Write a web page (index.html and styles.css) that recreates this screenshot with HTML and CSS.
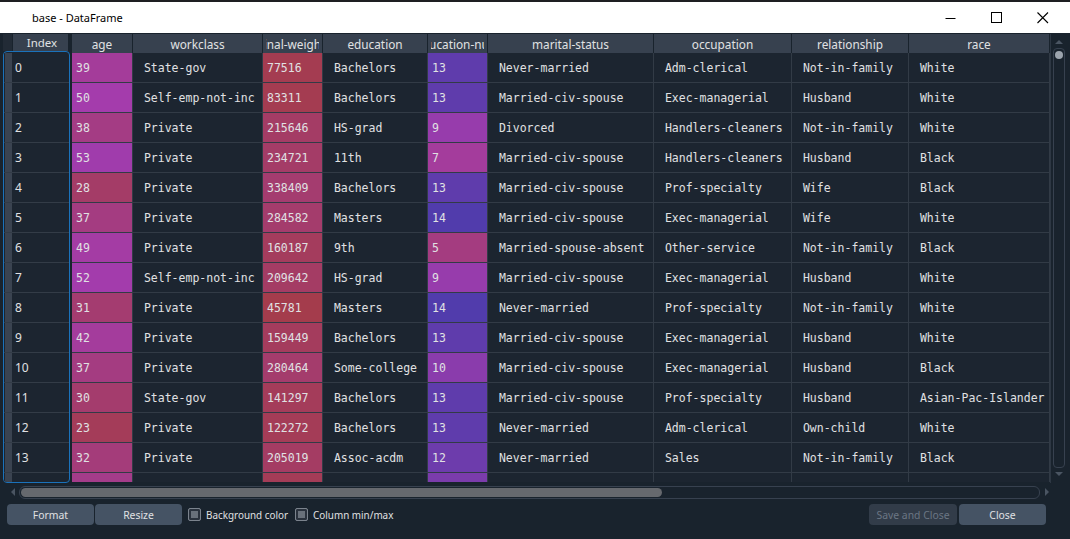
FILE: index.html
```html
<!DOCTYPE html>
<html>
<head>
<meta charset="utf-8">
<title>base - DataFrame</title>
<link rel="stylesheet" href="styles.css">
</head>
<body>
<div class="titlebar">
  <div class="title">base - DataFrame</div>
  <div class="controls">
    <div class="ctrl"><svg width="12" height="12" viewBox="0 0 12 12"><path d="M0.5 6.5h10" stroke="#000" stroke-width="1"/></svg></div>
    <div class="ctrl"><svg width="12" height="12" viewBox="0 0 12 12"><rect x="0.5" y="0.5" width="10" height="10" fill="none" stroke="#000" stroke-width="1"/></svg></div>
    <div class="ctrl"><svg width="12" height="12" viewBox="0 0 12 12"><path d="M0.5 0.5L11 11M11 0.5L0.5 11" stroke="#000" stroke-width="1.1"/></svg></div>
  </div>
</div>

<div class="main">
  <div class="grid-area">
    <div class="index-pane">
      <div class="index-headrow"><div class="corner"></div><div class="index-head">Index</div></div>
      <div class="index-body">
        <div class="irow"><span class="vh"></span><span class="ic">0</span></div>
        <div class="irow"><span class="vh"></span><span class="ic">1</span></div>
        <div class="irow"><span class="vh"></span><span class="ic">2</span></div>
        <div class="irow"><span class="vh"></span><span class="ic">3</span></div>
        <div class="irow"><span class="vh"></span><span class="ic">4</span></div>
        <div class="irow"><span class="vh"></span><span class="ic">5</span></div>
        <div class="irow"><span class="vh"></span><span class="ic">6</span></div>
        <div class="irow"><span class="vh"></span><span class="ic">7</span></div>
        <div class="irow"><span class="vh"></span><span class="ic">8</span></div>
        <div class="irow"><span class="vh"></span><span class="ic">9</span></div>
        <div class="irow"><span class="vh"></span><span class="ic">10</span></div>
        <div class="irow"><span class="vh"></span><span class="ic">11</span></div>
        <div class="irow"><span class="vh"></span><span class="ic">12</span></div>
        <div class="irow"><span class="vh"></span><span class="ic">13</span></div>
        <div class="irow"><span class="vh"></span><span class="ic">14</span></div>
      </div>
    </div>

    <div class="data-pane">
      <div class="data-head">
        <div class="hc"><div class="hl"><span>age</span></div></div>
        <div class="hc"><div class="hl"><span>workclass</span></div></div>
        <div class="hc"><div class="hl"><span>final-weight</span></div></div>
        <div class="hc"><div class="hl"><span>education</span></div></div>
        <div class="hc"><div class="hl"><span>education-num</span></div></div>
        <div class="hc"><div class="hl"><span>marital-status</span></div></div>
        <div class="hc"><div class="hl"><span>occupation</span></div></div>
        <div class="hc"><div class="hl"><span>relationship</span></div></div>
        <div class="hc"><div class="hl"><span>race</span></div></div>
      </div>
      <div class="data-body">
        <div class="row"><div class="c n" style="--h:310">39</div><div class="c"> State-gov</div><div class="c n" style="--h:351.1">77516</div><div class="c"> Bachelors</div><div class="c n" style="--h:261.4">13</div><div class="c"> Never-married</div><div class="c"> Adm-clerical</div><div class="c"> Not-in-family</div><div class="c"> White</div></div>
        <div class="row"><div class="c n" style="--h:300">50</div><div class="c"> Self-emp-not-inc</div><div class="c n" style="--h:350.7">83311</div><div class="c"> Bachelors</div><div class="c n" style="--h:261.4">13</div><div class="c"> Married-civ-spouse</div><div class="c"> Exec-managerial</div><div class="c"> Husband</div><div class="c"> White</div></div>
        <div class="row"><div class="c n" style="--h:322.2">38</div><div class="c"> Private</div><div class="c n" style="--h:340.0">215646</div><div class="c"> HS-grad</div><div class="c n" style="--h:293.0">9</div><div class="c"> Divorced</div><div class="c"> Handlers-cleaners</div><div class="c"> Not-in-family</div><div class="c"> White</div></div>
        <div class="row"><div class="c n" style="--h:297.8">53</div><div class="c"> Private</div><div class="c n" style="--h:338.5">234721</div><div class="c"> 11th</div><div class="c n" style="--h:308.9">7</div><div class="c"> Married-civ-spouse</div><div class="c"> Handlers-cleaners</div><div class="c"> Husband</div><div class="c"> Black</div></div>
        <div class="row"><div class="c n" style="--h:338.5">28</div><div class="c"> Private</div><div class="c n" style="--h:334">338409</div><div class="c"> Bachelors</div><div class="c n" style="--h:261.4">13</div><div class="c"> Married-civ-spouse</div><div class="c"> Prof-specialty</div><div class="c"> Wife</div><div class="c"> Black</div></div>
        <div class="row"><div class="c n" style="--h:323.9">37</div><div class="c"> Private</div><div class="c n" style="--h:336">284582</div><div class="c"> Masters</div><div class="c n" style="--h:253.4">14</div><div class="c"> Married-civ-spouse</div><div class="c"> Exec-managerial</div><div class="c"> Wife</div><div class="c"> White</div></div>
        <div class="row"><div class="c n" style="--h:304.3">49</div><div class="c"> Private</div><div class="c n" style="--h:344.5">160187</div><div class="c"> 9th</div><div class="c n" style="--h:324.7">5</div><div class="c"> Married-spouse-absent</div><div class="c"> Other-service</div><div class="c"> Not-in-family</div><div class="c"> Black</div></div>
        <div class="row"><div class="c n" style="--h:299.4">52</div><div class="c"> Self-emp-not-inc</div><div class="c n" style="--h:340.5">209642</div><div class="c"> HS-grad</div><div class="c n" style="--h:293.0">9</div><div class="c"> Married-civ-spouse</div><div class="c"> Exec-managerial</div><div class="c"> Husband</div><div class="c"> White</div></div>
        <div class="row"><div class="c n" style="--h:333.6">31</div><div class="c"> Private</div><div class="c n" style="--h:353.7">45781</div><div class="c"> Masters</div><div class="c n" style="--h:253.4">14</div><div class="c"> Never-married</div><div class="c"> Prof-specialty</div><div class="c"> Not-in-family</div><div class="c"> White</div></div>
        <div class="row"><div class="c n" style="--h:309">42</div><div class="c"> Private</div><div class="c n" style="--h:344.5">159449</div><div class="c"> Bachelors</div><div class="c n" style="--h:261.4">13</div><div class="c"> Married-civ-spouse</div><div class="c"> Exec-managerial</div><div class="c"> Husband</div><div class="c"> White</div></div>
        <div class="row"><div class="c n" style="--h:323.9">37</div><div class="c"> Private</div><div class="c n" style="--h:336">280464</div><div class="c"> Some-college</div><div class="c n" style="--h:285.1">10</div><div class="c"> Married-civ-spouse</div><div class="c"> Exec-managerial</div><div class="c"> Husband</div><div class="c"> Black</div></div>
        <div class="row"><div class="c n" style="--h:335.2">30</div><div class="c"> State-gov</div><div class="c n" style="--h:346.0">141297</div><div class="c"> Bachelors</div><div class="c n" style="--h:261.4">13</div><div class="c"> Married-civ-spouse</div><div class="c"> Prof-specialty</div><div class="c"> Husband</div><div class="c"> Asian-Pac-Islander</div></div>
        <div class="row"><div class="c n" style="--h:346.6">23</div><div class="c"> Private</div><div class="c n" style="--h:347.5">122272</div><div class="c"> Bachelors</div><div class="c n" style="--h:261.4">13</div><div class="c"> Never-married</div><div class="c"> Adm-clerical</div><div class="c"> Own-child</div><div class="c"> White</div></div>
        <div class="row"><div class="c n" style="--h:328">32</div><div class="c"> Private</div><div class="c n" style="--h:340.9">205019</div><div class="c"> Assoc-acdm</div><div class="c n" style="--h:269.3">12</div><div class="c"> Never-married</div><div class="c"> Sales</div><div class="c"> Not-in-family</div><div class="c"> Black</div></div>
        <div class="row"><div class="c n" style="--h:319.0">40</div><div class="c"> Private</div><div class="c n" style="--h:347.6">121772</div><div class="c"> Assoc-voc</div><div class="c n" style="--h:277.2">11</div><div class="c"> Married-civ-spouse</div><div class="c"> Craft-repair</div><div class="c"> Husband</div><div class="c"> Asian-Pac-Islander</div></div>
      </div>
    </div>

    <div class="vscroll">
      <svg class="arrow" width="10" height="6" viewBox="0 0 10 6"><path d="M1 5L5 1L9 5Z" fill="#4a5562"/></svg>
      <div class="vgroove"><div class="vhandle"></div></div>
      <svg class="arrow" width="10" height="6" viewBox="0 0 10 6"><path d="M1 1L5 5L9 1Z" fill="#4a5562"/></svg>
    </div>
  </div>

  <div class="hscroll">
    <svg class="harrow" width="6" height="10" viewBox="0 0 6 10"><path d="M5 1L1 5L5 9Z" fill="#4a5562"/></svg>
    <div class="hgroove"><div class="hhandle"></div></div>
    <svg class="harrow" width="6" height="10" viewBox="0 0 6 10"><path d="M1 1L5 5L1 9Z" fill="#4a5562"/></svg>
  </div>

  <div class="buttons">
    <div class="btn">Format</div>
    <div class="btn">Resize</div>
    <label class="check first"><span class="box"></span>Background color</label>
    <label class="check"><span class="box"></span>Column min/max</label>
    <div class="spacer"></div>
    <div class="btn disabled">Save and Close</div>
    <div class="btn">Close</div>
  </div>
</div>
</body>
</html>
```

FILE: styles.css
```css
* { box-sizing: border-box; }

body {
  margin: 0;
  width: 1070px;
  height: 539px;
  overflow: hidden;
  background: #19232d;
  font-family: "Noto Sans", "Open Sans", sans-serif;
  color: #e0e1e3;
}

/* ---------- title bar ---------- */
.titlebar {
  height: 33px;
  border-top: 2px solid #1e1f22;
  background: #ffffff;
  color: #000;
  display: flex;
  align-items: center;
  padding-left: 32px;
  padding-right: 4px;
  font-size: 11px;
}
.title { flex: 1; }
.controls { display: flex; }
.ctrl {
  width: 46px;
  height: 31px;
  display: flex;
  align-items: center;
  justify-content: center;
}

/* ---------- main ---------- */
.main {
  padding: 1px 4px 0 3px;
}
.grid-area {
  display: flex;
  height: 449px;
}

/* index pane */
.index-pane {
  width: 67px;
  display: flex;
  flex-direction: column;
}
.index-headrow {
  height: 17px;
  display: flex;
}
.corner {
  width: 10px;
  background: #222b36;
  border-right: 1px solid #19232d;
}
.index-head {
  width: 55px;
  background: #37414f;
  display: flex;
  align-items: center;
  justify-content: center;
  font-size: 11.5px;
  padding-left: 3px;
}
.index-body {
  flex: 1;
  border: 1px solid #1a72bb;
  border-radius: 4px;
  overflow: hidden;
  padding-top: 1px;
  background: #1c2530;
}
.irow {
  height: 30px;
  display: flex;
  border-bottom: 1px solid #333c47;
}
.vh {
  width: 8px;
  background: #3a4350;
  border-left: 1px solid #1c2530;
}
.ic {
  flex: 1;
  display: flex;
  align-items: center;
  padding-left: 3px;
  font-size: 12px;
}

/* data pane */
.data-pane {
  width: 978px;
  margin-left: 2px;
  height: 448px;
  display: flex;
  flex-direction: column;
  overflow: hidden;
}
.data-head, .row {
  display: grid;
  grid-template-columns: 61px 130px 60px 105px 60px 166px 138px 117px 141px;
}
.data-head {
  height: 19px;
  flex: none;
}
.hc {
  background: #37414f;
  border-right: 1px solid #19232d;
  padding: 0 3px;
  display: flex;
  overflow: hidden;
}
.hl {
  flex: 1;
  display: flex;
  align-items: center;
  justify-content: center;
  overflow: hidden;
  white-space: nowrap;
  font-size: 11.8px;
}
.hl span { flex: none; }
.data-body {
  flex: 1;
  overflow: hidden;
  background: #1c2530;
}
.row {
  height: 30px;
  border-bottom: 1px solid #323b46;
}
.c {
  border-right: 1px solid #323b46;
  display: flex;
  align-items: center;
  padding-left: 4px;
  padding-top: 1px;
  white-space: pre;
  overflow: hidden;
  font-family: "DejaVu Sans Mono", monospace;
  font-size: 11.5px;
  color: #e0e1e3;
}
.c.n {
  background-color: hsl(var(--h) 100% 65% / 0.6);
}

/* vertical scrollbar */
.vscroll {
  width: 16px;
  border-left: 1px solid #2d3743;
  display: flex;
  flex-direction: column;
  align-items: center;
  padding: 5px 1px 6px 2px;
}
.arrow { flex: none; }
.vgroove {
  flex: 1;
  width: 12px;
  margin: 3px 0;
  border: 1px solid #37414f;
  border-radius: 4px;
  padding-top: 2px;
  display: flex;
  justify-content: center;
}
.vhandle {
  width: 8px;
  height: 8px;
  border-radius: 50%;
  background: #9ca4ad;
}

/* horizontal scrollbar */
.hscroll {
  height: 16px;
  margin-top: 1px;
  width: 1047px;
  display: flex;
  align-items: center;
  padding-left: 7px;
}
.harrow { flex: none; }
.hgroove {
  flex: 1;
  height: 13px;
  margin: 0 4px 0 3px;
  border: 1px solid #37414f;
  border-radius: 6px;
  padding: 1px 0 1px 1px;
}
.hhandle {
  width: 641px;
  height: 9px;
  border-radius: 5px;
  background: #66696e;
}

/* bottom buttons */
.buttons {
  margin-top: 4px;
  height: 21px;
  display: flex;
  align-items: center;
  padding-left: 4px;
  padding-right: 20px;
  gap: 1px;
  font-size: 10.4px;
}
.btn {
  width: 87px;
  height: 21px;
  border-radius: 4px;
  background: #455364;
  display: flex;
  align-items: center;
  justify-content: center;
  color: #e0e1e3;
}
.btn.disabled {
  width: 88px;
  background: #323c49;
  color: #6b7684;
  margin-right: 1px;
}
.check {
  display: flex;
  align-items: center;
  margin-left: 6px;
  color: #e0e1e3;
  font-size: 9.9px;
}
.check.first { margin-left: 5px; }
.box {
  width: 13px;
  height: 13px;
  border: 1px solid #7b838d;
  border-radius: 2px;
  background: #69717b;
  box-shadow: inset 0 0 0 2px #2a323d;
  margin-right: 5px;
}
.spacer { flex: 1; }
```
